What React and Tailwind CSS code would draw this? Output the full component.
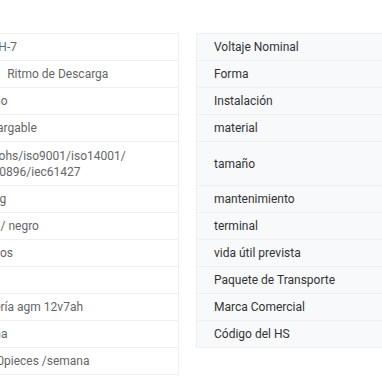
import React from 'react';

const values = [
  '12AH-7',
  'C20\u00a0\u00a0\u00a0Ritmo de Descarga',
  'Plano',
  'Recargable',
  ['ce/rohs/iso9001/iso14001/', 'iec60896/iec61427'],
  '2.3kg',
  'rojo / negro',
  '5 años',
  '',
  'batería agm 12v7ah',
  'China',
  '5000pieces /semana',
];

const labels = [
  'Voltaje Nominal',
  'Forma',
  'Instalación',
  'material',
  'tamaño',
  'mantenimiento',
  'terminal',
  'vida útil prevista',
  'Paquete de Transporte',
  'Marca Comercial',
  'Código del HS',
];

const Row = ({ tall, className, children }) => (
  <div
    className={`flex flex-col justify-center border-b border-[#eef0f3] ${tall ? 'h-[44px]' : 'h-[27px]'} ${className}`}
  >
    {children}
  </div>
);

const App = () => {
  return (
    <div
      className="flex items-start w-[382px] h-[382px] overflow-hidden bg-white pt-[33px] text-[12px] leading-[16px]"
      style={{ fontFamily: 'Roboto, "Liberation Sans", sans-serif' }}
    >
      {/* values column of the previous table, clipped at the page edge */}
      <div className="shrink-0 w-[220px] ml-[-41px] border border-b-0 border-[#eef0f3] bg-white">
        {values.map((v, i) => (
          <Row key={i} tall={Array.isArray(v)} className="pl-[17px] text-[#666] whitespace-nowrap">
            {Array.isArray(v) ? v.map((line) => <span key={line}>{line}</span>) : <span>{v}</span>}
          </Row>
        ))}
      </div>

      <div className="shrink-0 w-[260px] ml-[17px] border border-b-0 border-[#eef0f3] bg-[#f8f9fb]">
        {labels.map((l, i) => (
          <Row key={l} tall={i === 4} className="pl-[17px] text-[#333] whitespace-nowrap">
            <span>{l}</span>
          </Row>
        ))}
      </div>
    </div>
  );
};

export default App;
